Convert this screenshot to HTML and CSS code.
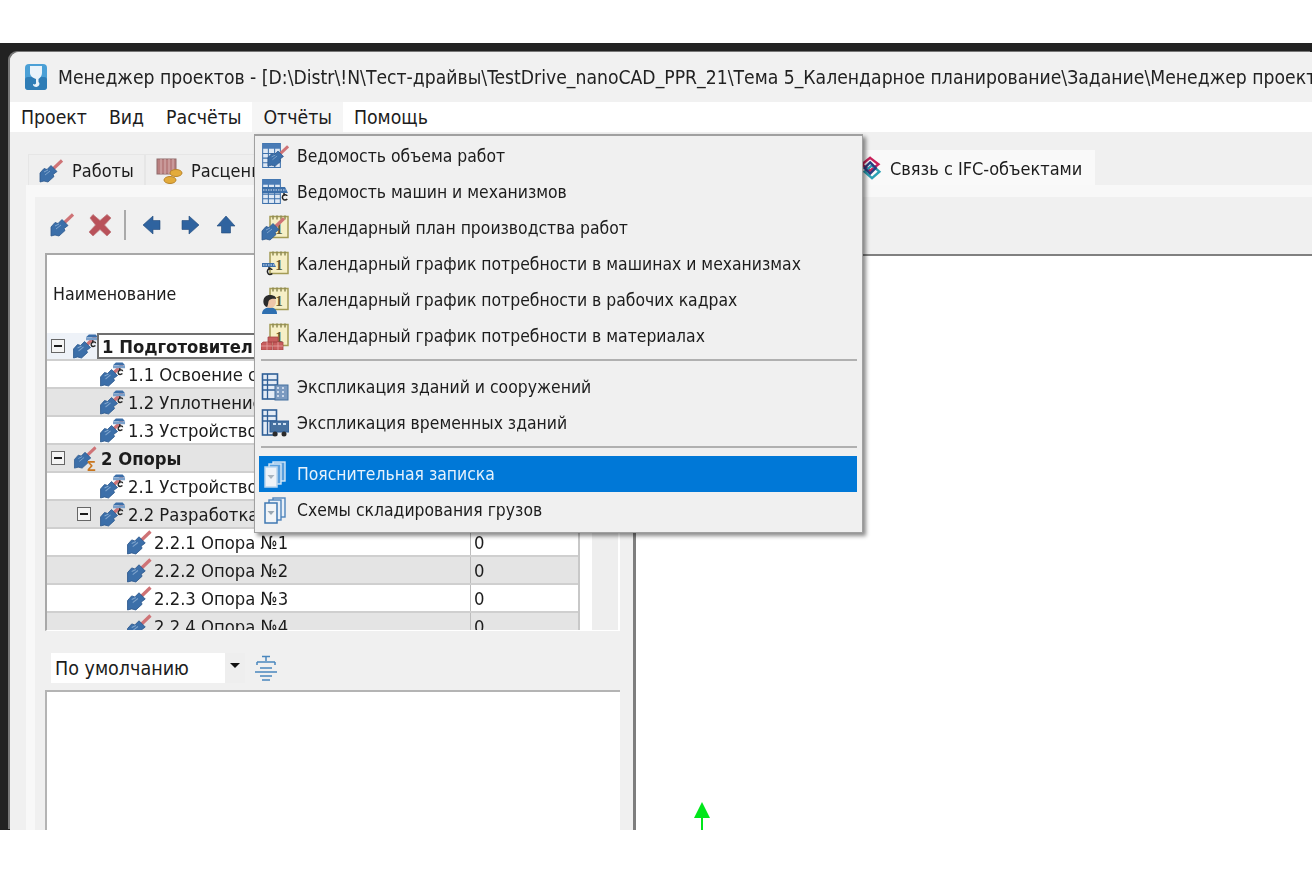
FILE: index.html
```html
<!DOCTYPE html>
<html lang="ru">
<head>
<meta charset="utf-8">
<title>Менеджер проектов</title>
<link rel="stylesheet" href="styles.css">
</head>
<body>
<svg class="sprite" xmlns="http://www.w3.org/2000/svg">
  <symbol id="trowel" viewBox="0 0 24 24">
    <path d="M14 10L23 1.500" stroke="#cf7376" stroke-width="3.200" fill="none"/>
    <path d="M1 23V14L5 9.500L8 10.500L12 6.500L18 12.500L14 15.500L15 17.500L9 23L5 22Z" fill="#3c6fa9" stroke="#2b578c" stroke-width=".8"/>
    <path d="M5 13L9 11M6 16L11 12" stroke="#7fa4cc" stroke-width="1" fill="none"/>
  </symbol>
  <symbol id="cross" viewBox="0 0 24 24">
    <path d="M2 5L5 1.500L12 7.500L19 1.500L23 5L16.500 12L23 19L19 23L12 16.500L5 23L1 19L7.500 12Z" fill="#b9525a" stroke="#c07a7e" stroke-width=".8"/>
  </symbol>
  <symbol id="arrow" viewBox="0 0 20 20">
    <path d="M1 10L11 1V5.500H18V14.500H11V19Z" fill="#2f639f" stroke="#22497a" stroke-width=".6"/>
  </symbol>
  <symbol id="hook-trowel" viewBox="0 0 26 26">
    <use href="#trowel" x="-1" y="1" width="25" height="25"/>
    <path d="M13 3.500L16 0.500H23L25.500 3.500Z" fill="#3c6fa9"/>
    <rect x="13" y="3.500" width="12.500" height="3" fill="#7ba0ca"/>
    <path d="M20 6.500V9.500M23 9.500C23 8 20 7.500 18.800 9.500C17.800 11 18.500 13 20.500 13C21.500 13 22.300 12.500 22.800 12" stroke="#222" stroke-width="1.400" fill="none"/>
  </symbol>
  <symbol id="sum-trowel" viewBox="0 0 26 26">
    <use href="#trowel" x="0" y="0" width="24" height="24"/>
    <text x="14" y="26" class="sum-glyph">Σ</text>
  </symbol>
  <symbol id="tbl" viewBox="0 0 18 24">
    <rect x=".5" y=".5" width="17" height="23" fill="#dfe9f5" stroke="#3f72ac"/>
    <rect x=".5" y=".5" width="17" height="5" fill="#4a7cb6"/>
    <path d="M.5 10H17.500M.5 14.500H17.500M.5 19H17.500M6 5V23.500M12 5V23.500" stroke="#3f72ac" fill="none"/>
  </symbol>
  <symbol id="cal" viewBox="0 0 20 24">
    <rect x="1" y="2" width="18" height="21" fill="#f6efc6" stroke="#a39b55" stroke-width="1.500"/>
    <path d="M4 1V5M8 1V5M12 1V5M16 1V5" stroke="#8e8a54" stroke-width="1.500"/>
    <text x="10" y="19" class="cal-glyph">1</text>
  </symbol>
  <symbol id="money" viewBox="0 0 28 26">
    <rect x="2" y="1" width="19" height="15" fill="#b97f7f" stroke="#8f6b6b"/>
    <path d="M6 1V16M10 1V16M14 1V16M18 1V16" stroke="#d9b5b5"/>
    <ellipse cx="21" cy="15" rx="6" ry="3.500" fill="#e3ab3b" stroke="#b9842a"/>
    <ellipse cx="15" cy="22" rx="6" ry="3.500" fill="#e3ab3b" stroke="#b9842a"/>
  </symbol>
  <symbol id="m-volume" viewBox="0 0 28 28">
    <use href="#tbl" x="1" y="1" width="19" height="25"/>
    <use href="#trowel" x="6" y="2" width="22" height="24"/>
  </symbol>
  <symbol id="m-machines" viewBox="0 0 28 28">
    <use href="#tbl" x="1" y="1" width="19" height="25"/>
    <path d="M1 9H24L27 15H1Z" fill="#3c6fa9"/>
    <path d="M2 12H25" stroke="#dbe6f3" stroke-width="1.200" stroke-dasharray="1.500 1"/>
    <path d="M23 15V18M26 18C26 16.500 23 16 21.800 17.800C20.800 19.500 21.800 22 23.800 22C25 22 25.800 21.500 26.300 21" stroke="#222" stroke-width="1.500" fill="none"/>
  </symbol>
  <symbol id="m-cal-work" viewBox="0 0 28 28">
    <use href="#cal" x="8" y="0" width="20" height="25"/>
    <use href="#trowel" x="0" y="2" width="24" height="26"/>
  </symbol>
  <symbol id="m-cal-mach" viewBox="0 0 28 28">
    <use href="#cal" x="8" y="0" width="20" height="25"/>
    <path d="M1 13H13L15 17H1Z" fill="#3c6fa9"/>
    <path d="M2 15H14" stroke="#dbe6f3" stroke-width="1.200" stroke-dasharray="1.500 1"/>
    <path d="M8 17V20M11 20C11 18.500 8 18 6.800 19.800C5.800 21.500 6.800 24.500 8.800 24.500C10 24.500 10.800 24 11.300 23.500" stroke="#222" stroke-width="1.500" fill="none"/>
  </symbol>
  <symbol id="m-cal-person" viewBox="0 0 28 28">
    <use href="#cal" x="8" y="0" width="20" height="25"/>
    <path d="M1 28C1 23 5 21.500 9 21.500C13 21.500 16 23 16 28Z" fill="#2e6fb0"/>
    <circle cx="9" cy="16" r="6" fill="#eec6a8"/>
    <path d="M2.500 17C1.500 11 6 8.500 10 9C14 9.500 15.500 11.500 15 13C12 12.500 9 13 8 14.500C7 15.500 7.500 19 6 21C4 20.500 3 19 2.500 17Z" fill="#2b2b2b"/>
  </symbol>
  <symbol id="m-cal-brick" viewBox="0 0 28 28">
    <use href="#cal" x="8" y="0" width="20" height="25"/>
    <path d="M7 15H17V20H7ZM2 20H11V28H0V22ZM12 20H22V28H12Z" fill="#c75d5d" stroke="#a84646" stroke-width=".8"/>
    <path d="M6 20V28M17 20V28M0 24H22" stroke="#e9a5a5" stroke-width=".8"/>
  </symbol>
  <symbol id="m-build" viewBox="0 0 28 28">
    <rect x="1.500" y="1" width="15" height="25" fill="#e4ecf6" stroke="#2f5f97" stroke-width="1.600"/>
    <path d="M2 7H16M2 12H16M2 17H16M6.500 1V26" stroke="#2f5f97" stroke-width="1.300"/>
    <rect x="14" y="12" width="13" height="15" fill="#7b9ac0" stroke="#45709f"/>
    <path d="M16 15H18M21 15H23M16 19H18M21 19H23M16 23H18M21 23H23" stroke="#e4ecf6" stroke-width="1.500"/>
  </symbol>
  <symbol id="m-truck" viewBox="0 0 28 28">
    <rect x="1.500" y="1" width="14" height="25" fill="#e4ecf6" stroke="#2f5f97" stroke-width="1.600"/>
    <path d="M2 7H15M2 12H15M6.500 1V26" stroke="#2f5f97" stroke-width="1.300"/>
    <rect x="9" y="12" width="19" height="11" fill="#47719f" stroke="#2f5f97"/>
    <path d="M12 15H15M17 15H20M22 15H25" stroke="#cfe0f2" stroke-width="1.800"/>
    <circle cx="14" cy="25" r="2.500" fill="#2b2b2b"/>
    <circle cx="23" cy="25" r="2.500" fill="#2b2b2b"/>
  </symbol>
  <symbol id="m-docs" viewBox="0 0 28 28">
    <rect x="12" y="2" width="12" height="19" fill="#e9f0f8" stroke="#4e84bb" stroke-width="1.400"/>
    <rect x="8" y="4" width="12" height="20" fill="#e9f0f8" stroke="#4e84bb" stroke-width="1.400"/>
    <rect x="4" y="7" width="12" height="20" fill="#f1f4f7" stroke="#3f78b2" stroke-width="1.500"/>
    <path d="M6.500 15H13.500L10 19Z" fill="#9aa7b2"/>
  </symbol>
  <symbol id="m-docs-light" viewBox="0 0 28 28">
    <rect x="12" y="2" width="12" height="19" fill="#5aa0de" stroke="#d5e7f7" stroke-width="1.400"/>
    <rect x="8" y="4" width="12" height="20" fill="#5aa0de" stroke="#d5e7f7" stroke-width="1.400"/>
    <rect x="4" y="7" width="12" height="20" fill="#eef3f8" stroke="#b9d6ef" stroke-width="1.500"/>
    <path d="M6.500 15H13.500L10 19Z" fill="#a9b5bf"/>
  </symbol>
  <symbol id="group" viewBox="0 0 24 26">
    <path d="M8 1.500H16M12 1.500V6M3 7H21M3 7V10M21 7V10M6 13H18M1 17H23M6 21H18M8 25H16" stroke="#4a86bd" stroke-width="1.500" fill="none"/>
  </symbol>
  <symbol id="ifc" viewBox="0 0 24 26">
    <path d="M10 2L19 9L10 16L1 9Z" stroke="#c9215a" stroke-width="2.600" fill="none"/>
    <path d="M12 10L20 17L12 24L4 17Z" stroke="#2aa0b4" stroke-width="2.600" fill="none"/>
    <path d="M10 7L16 13L10 19L4 13Z" stroke="#2c3c80" stroke-width="2.600" fill="none"/>
  </symbol>
  <symbol id="app" viewBox="0 0 22 26">
    <rect width="22" height="26" rx="4" fill="#4ba0d6"/>
    <rect y="13" width="22" height="13" rx="3" fill="#2f7db6"/>
    <path d="M5 2H17V9C17 12 15 14 13.500 15V18C15 19 15 22 11.500 23C9 23 7.500 21 8 20C10 21 11.500 20 11 18V15C8 14 5 12 5 9Z" fill="#e9f3fa"/>
  </symbol>
</svg>

<div class="shot">
  <div class="window">
    <div class="titlebar">
      <svg class="app-icon"><use href="#app"/></svg>
      <span class="title-text">Менеджер проектов - [D:\Distr\!N\Тест-драйвы\TestDrive_nanoCAD_PPR_21\Тема 5_Календарное планирование\Задание\Менеджер проектов</span>
    </div>
    <nav class="menubar">
      <span class="menu-top">Проект</span>
      <span class="menu-top">Вид</span>
      <span class="menu-top">Расчёты</span>
      <span class="menu-top menu-top-open">Отчёты</span>
      <span class="menu-top">Помощь</span>
    </nav>
    <div class="tabs">
      <div class="tab"><svg class="tab-icon"><use href="#trowel"/></svg>Работы</div>
      <div class="tab tab-second"><svg class="tab-icon tab-icon-wide"><use href="#money"/></svg>Расценки</div>
      <div class="tab tab-active"><svg class="tab-icon"><use href="#ifc"/></svg>Связь с IFC-объектами</div>
    </div>
    <div class="page">
      <div class="topbar">
        <svg class="tool"><use href="#trowel"/></svg>
        <svg class="tool tool-cross"><use href="#cross"/></svg>
        <span class="tool-sep"></span>
        <svg class="tool-arrow"><use href="#arrow"/></svg>
        <svg class="tool-arrow tool-right"><use href="#arrow"/></svg>
        <svg class="tool-arrow tool-up"><use href="#arrow"/></svg>
      </div>
      <div class="split">
        <section class="left">
          <div class="grid">
            <div class="tree">
              <div class="tree-head">Наименование</div>
              <div class="row row-focus">
                <div class="name lvl0"><span class="expander"></span><svg class="node"><use href="#hook-trowel"/></svg><span class="label-focus">1 Подготовительные работы</span></div>
                <div class="val"></div>
              </div>
              <div class="row">
                <div class="name lvl1"><span class="slot"></span><svg class="node"><use href="#hook-trowel"/></svg><span class="label">1.1 Освоение строительной площадки</span></div>
                <div class="val"></div>
              </div>
              <div class="row row-alt">
                <div class="name lvl1"><span class="slot"></span><svg class="node"><use href="#hook-trowel"/></svg><span class="label">1.2 Уплотнение грунта</span></div>
                <div class="val"></div>
              </div>
              <div class="row">
                <div class="name lvl1"><span class="slot"></span><svg class="node"><use href="#hook-trowel"/></svg><span class="label">1.3 Устройство дорог</span></div>
                <div class="val"></div>
              </div>
              <div class="row row-alt">
                <div class="name lvl0"><span class="expander"></span><svg class="node"><use href="#sum-trowel"/></svg><span class="label-bold">2 Опоры</span></div>
                <div class="val"></div>
              </div>
              <div class="row">
                <div class="name lvl1"><span class="slot"></span><svg class="node"><use href="#hook-trowel"/></svg><span class="label">2.1 Устройство подъездов</span></div>
                <div class="val"></div>
              </div>
              <div class="row row-alt">
                <div class="name lvl1"><span class="expander"></span><svg class="node"><use href="#hook-trowel"/></svg><span class="label">2.2 Разработка котлованов</span></div>
                <div class="val"></div>
              </div>
              <div class="row">
                <div class="name lvl2"><span class="slot"></span><svg class="node"><use href="#trowel"/></svg><span class="label">2.2.1 Опора №1</span></div>
                <div class="val">0</div>
              </div>
              <div class="row row-alt">
                <div class="name lvl2"><span class="slot"></span><svg class="node"><use href="#trowel"/></svg><span class="label">2.2.2 Опора №2</span></div>
                <div class="val">0</div>
              </div>
              <div class="row">
                <div class="name lvl2"><span class="slot"></span><svg class="node"><use href="#trowel"/></svg><span class="label">2.2.3 Опора №3</span></div>
                <div class="val">0</div>
              </div>
              <div class="row row-alt">
                <div class="name lvl2"><span class="slot"></span><svg class="node"><use href="#trowel"/></svg><span class="label">2.2.4 Опора №4</span></div>
                <div class="val">0</div>
              </div>
            </div>
            <div class="grid-gap"></div>
            <div class="track"></div>
          </div>
          <div class="controls">
            <div class="combo"><span class="combo-text">По умолчанию</span><span class="combo-btn"></span></div>
            <svg class="group-icon"><use href="#group"/></svg>
          </div>
          <div class="notes"></div>
        </section>
        <div class="splitter"></div>
        <section class="right">
          <svg class="axis" viewBox="0 0 16 28"><path d="M8 0L16 16H9V28H7V16H0Z" fill="#00e61a"/></svg>
        </section>
      </div>
    </div>

    <div class="menu">
      <div class="item"><svg class="item-icon"><use href="#m-volume"/></svg>Ведомость объема работ</div>
      <div class="item"><svg class="item-icon"><use href="#m-machines"/></svg>Ведомость машин и механизмов</div>
      <div class="item"><svg class="item-icon"><use href="#m-cal-work"/></svg>Календарный план производства работ</div>
      <div class="item"><svg class="item-icon"><use href="#m-cal-mach"/></svg>Календарный график потребности в машинах и механизмах</div>
      <div class="item"><svg class="item-icon"><use href="#m-cal-person"/></svg>Календарный график потребности в рабочих кадрах</div>
      <div class="item"><svg class="item-icon"><use href="#m-cal-brick"/></svg>Календарный график потребности в материалах</div>
      <div class="sep"></div>
      <div class="item"><svg class="item-icon"><use href="#m-build"/></svg>Экспликация зданий и сооружений</div>
      <div class="item"><svg class="item-icon"><use href="#m-truck"/></svg>Экспликация временных зданий</div>
      <div class="sep"></div>
      <div class="item item-active"><svg class="item-icon"><use href="#m-docs-light"/></svg>Пояснительная записка</div>
      <div class="item"><svg class="item-icon"><use href="#m-docs"/></svg>Схемы складирования грузов</div>
    </div>
  </div>
</div>
</body>
</html>
```

FILE: styles.css
```css
* { box-sizing: border-box; }
html, body { margin: 0; padding: 0; background: #fff; }
body {
  height: 872px;
  overflow: hidden;
  font-family: "DejaVu Sans", sans-serif;
  font-stretch: condensed;
  color: #1c1c1c;
}
.sprite { display: none; }
.sum-glyph { font-family: "Liberation Sans", sans-serif; font-size: 15px; font-weight: bold; fill: #c9761e; }
.cal-glyph { font-family: "Liberation Serif", serif; font-size: 15px; font-weight: bold; fill: #5c5a34; text-anchor: middle; }

.shot {
  margin-top: 43px;
  height: 787px;
  background: #222;
  padding: 9px 0 0 10px;
  overflow: hidden;
}
.window {
  position: relative;
  height: 778px;
  background: #f0f0f0;
  border-top-left-radius: 9px;
  overflow: hidden;
  display: flex;
  flex-direction: column;
  box-shadow: -2px -1px 0 #777;
  filter: blur(.45px);
}

.titlebar {
  height: 50px;
  flex: none;
  display: flex;
  align-items: center;
  padding-left: 15px;
  background: #f1f1f1;
  white-space: nowrap;
  overflow: hidden;
}
.app-icon { width: 22px; height: 26px; flex: none; margin-right: 11px; }
.title-text { font-size: 19.200px; color: #222; }

.menubar {
  height: 30px;
  flex: none;
  background: #fff;
  display: flex;
  align-items: center;
  font-size: 19.300px;
}
.menu-top { height: 100%; display: flex; align-items: center; padding: 1px 11px 0; }
.menu-top-open { background: #f5f5f5; }

.tabs {
  height: 53px;
  flex: none;
  display: flex;
  align-items: flex-end;
  padding-left: 18px;
  font-size: 18px;
}
.tab {
  height: 31px;
  width: 117px;
  padding: 1px 0 0 10px;
  display: flex;
  align-items: center;
  gap: 9px;
  background: #efefef;
  border: 1px solid #e6e6e6;
  border-bottom: 0;
}
.tab-second { width: 240px; padding-left: 9px; gap: 8px; }
.tab-active {
  height: 35px;
  width: 235px;
  margin-left: auto;
  margin-right: 217px;
  padding-left: 0;
  gap: 6px;
  background: #f9f9f9;
  border: 0;
}
.tab-icon { width: 24px; height: 24px; flex: none; }
.tab-icon-wide { width: 28px; height: 26px; }

.page {
  flex: 1;
  min-height: 0;
  margin-left: 16px;
  padding: 12px 0 0 9px;
  background: #f8f8f8;
  display: flex;
  flex-direction: column;
}
.topbar {
  height: 56px;
  flex: none;
  background: #f0f0f0;
  display: flex;
  align-items: center;
  padding-left: 15px;
}
.tool { width: 24px; height: 24px; margin-right: 14px; flex: none; }
.tool-cross { margin-right: 12px; }
.tool-sep { width: 2px; height: 30px; background: #aaa; margin-right: 16px; }
.tool-arrow { width: 20px; height: 20px; margin-right: 18px; flex: none; }
.tool-right { transform: rotate(180deg); }
.tool-up { transform: rotate(90deg); margin-right: 0; margin-left: -2px; }

.split { flex: 1; min-height: 0; display: flex; background: #f0f0f0; }
.left {
  width: 598px;
  flex: none;
  padding: 0 13px 0 10px;
  display: flex;
  flex-direction: column;
}
.splitter { width: 3px; flex: none; background: #7e7e7e; }
.right {
  position: relative;
  flex: 1;
  background: #fff;
  border-top: 2px solid #808080;
  margin-top: 1px;
}
.axis { position: absolute; left: 58px; top: 546px; width: 16px; height: 28px; }

.grid {
  height: 378px;
  flex: none;
  display: flex;
  background: #fff;
  border-top: 2px solid #a8a8a8;
  border-left: 2px solid #a8a8a8;
  border-bottom: 1px solid #fff;
  padding-right: 2px;
  overflow: hidden;
}
.tree {
  width: 533px;
  flex: none;
  border-right: 2px solid #c8c8c8;
  overflow: hidden;
}
.tree-head {
  height: 78px;
  display: flex;
  align-items: center;
  padding: 0 0 0 6px;
  font-size: 17.650px;
}
.grid-gap { width: 12px; flex: none; }
.track { width: 26px; flex: none; background: #eee; }

.row {
  height: 28px;
  display: flex;
  border-bottom: 2px solid #cfcfcf;
  font-size: 18.300px;
  white-space: nowrap;
}
.row-alt { background: #e4e4e4; }
.row-focus { background: #eef2f8; }
.name {
  width: 424px;
  flex: none;
  display: flex;
  align-items: center;
  border-right: 1px solid #bdbdbd;
  overflow: hidden;
}
.val { padding: 1px 0 0 3px; display: flex; align-items: center; }
.lvl0 { padding-left: 4px; }
.lvl1 { padding-left: 30px; }
.lvl2 { padding-left: 56px; }
.slot, .expander { width: 14px; height: 14px; flex: none; margin-right: 9px; }
.expander {
  border: 1px solid #666;
  background: linear-gradient(#1c1c1c, #1c1c1c) center / 8px 2px no-repeat, #f4f4f4;
}
.lvl0 .expander { margin-right: 8px; }
.node { width: 26px; height: 25px; flex: none; margin-right: 2px; }
.label { padding-top: 1px; }
.label-bold { padding-top: 1px; font-weight: bold; }
.label-focus {
  margin-left: -4px;
  height: 26px;
  width: 240px;
  flex: none;
  display: flex;
  align-items: center;
  padding: 1px 0 0 3px;
  font-weight: bold;
  background: #fff;
  border: 2px solid #707070;
}

.controls {
  height: 59px;
  flex: none;
  display: flex;
  align-items: flex-end;
  padding: 0 0 7px 6px;
}
.combo {
  width: 194px;
  height: 30px;
  background: #fff;
  display: flex;
  align-items: center;
  font-size: 19.500px;
}
.combo-text { flex: 1; padding-left: 4px; }
.combo-btn {
  width: 20px;
  height: 100%;
  background: #eee;
  display: flex;
  align-items: center;
  justify-content: center;
}
.combo-btn::after {
  content: "";
  margin-top: -5px;
  border-top: 5px solid #111;
  border-left: 5px solid transparent;
  border-right: 5px solid transparent;
}
.group-icon { width: 24px; height: 26px; margin: 0 0 2px 9px; }
.notes {
  flex: 1;
  background: #fff;
  border-top: 2px solid #b4b4b4;
  border-left: 2px solid #b4b4b4;
}

.menu {
  position: absolute;
  left: 244px;
  top: 82px;
  width: 609px;
  height: 399px;
  padding: 2px 5px 0 4px;
  background: #f0f0f0;
  border: 1px solid #a0a0a0;
  border-top-width: 2px;
  box-shadow: 3px 3px 4px rgba(0, 0, 0, .45);
  font-size: 17.400px;
}
.item {
  height: 36px;
  display: flex;
  align-items: center;
  padding-left: 2px;
  white-space: nowrap;
}
.item-icon { width: 28px; height: 28px; flex: none; margin-right: 8px; }
.item-active { background: #0078d7; color: #e6f2fc; }
.sep {
  height: 2px;
  margin: 5px 0 8px 2px;
  background: #b0b0b0;
}
```
